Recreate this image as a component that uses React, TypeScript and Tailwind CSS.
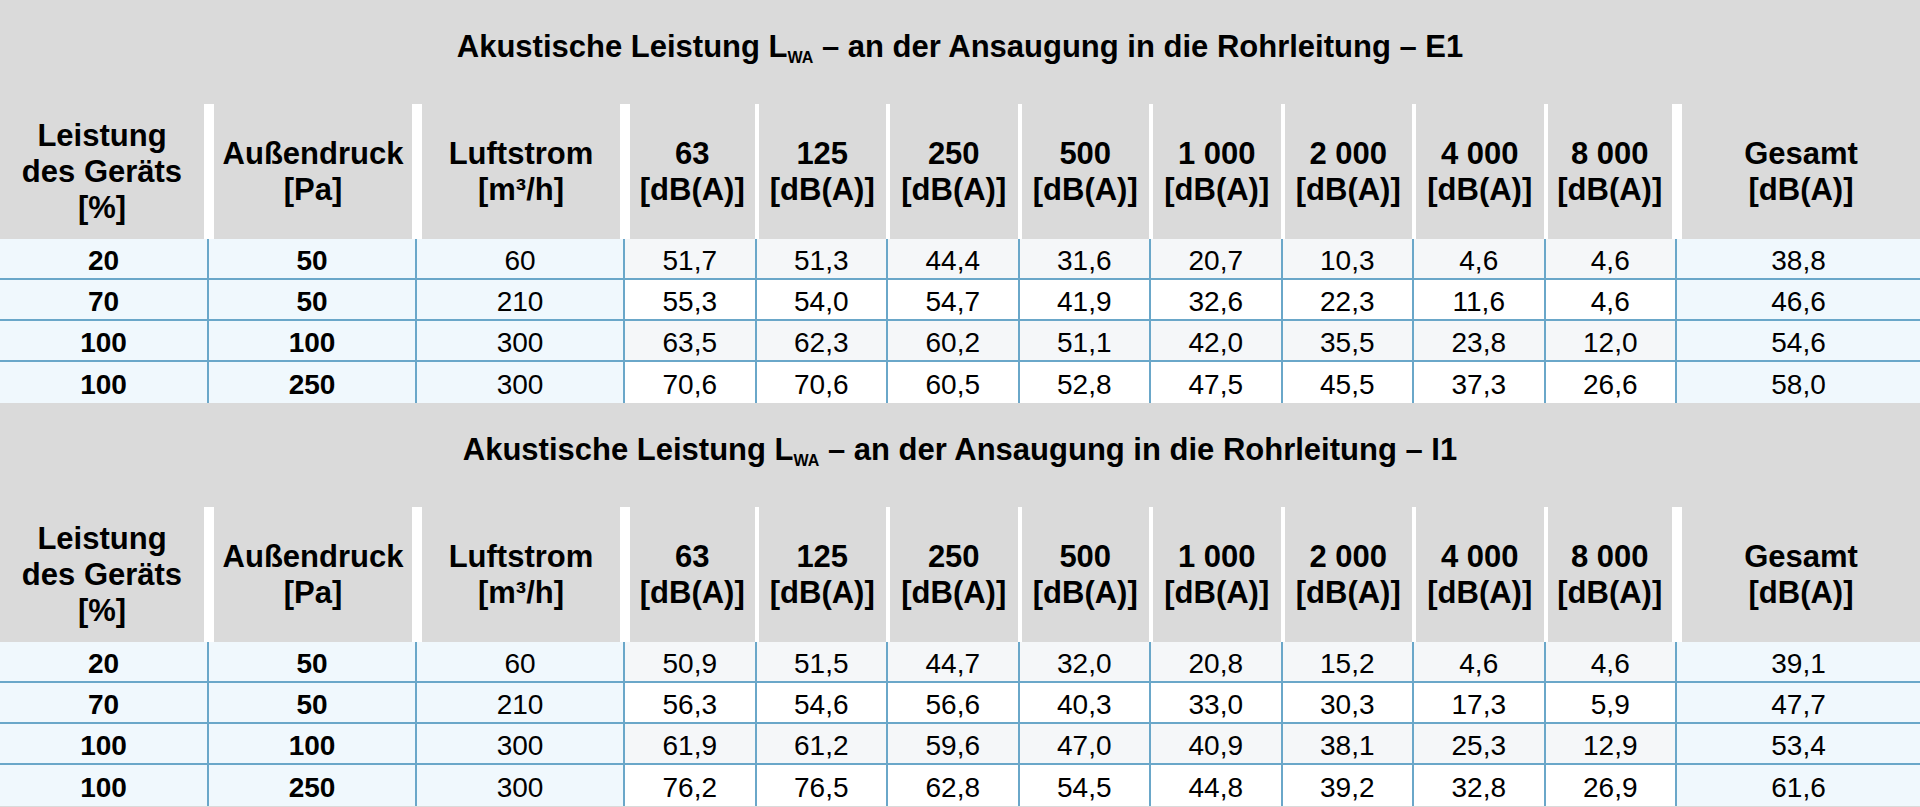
import React from "react";

type Row = { pct: string; pa: string; flow: string; bands: string[]; total: string };

const headers = [
  ["Leistung", "des Geräts", "[%]"],
  ["Außendruck", "[Pa]"],
  ["Luftstrom", "[m³/h]"],
  ["63", "[dB(A)]"],
  ["125", "[dB(A)]"],
  ["250", "[dB(A)]"],
  ["500", "[dB(A)]"],
  ["1 000", "[dB(A)]"],
  ["2 000", "[dB(A)]"],
  ["4 000", "[dB(A)]"],
  ["8 000", "[dB(A)]"],
  ["Gesamt", "[dB(A)]"],
];

// white gaps between header cells: wide around the fixed columns, narrow between the bands
const headerGaps = [
  "mr-[5px]",
  "mx-[5px]",
  "mx-[5px]",
  "ml-[5px] mr-[2px]",
  "mx-[2px]",
  "mx-[2px]",
  "mx-[2px]",
  "mx-[2px]",
  "mx-[2px]",
  "mx-[2px]",
  "ml-[2px] mr-[5px]",
  "ml-[5px]",
];

const e1: Row[] = [
  { pct: "20", pa: "50", flow: "60", bands: ["51,7", "51,3", "44,4", "31,6", "20,7", "10,3", "4,6", "4,6"], total: "38,8" },
  { pct: "70", pa: "50", flow: "210", bands: ["55,3", "54,0", "54,7", "41,9", "32,6", "22,3", "11,6", "4,6"], total: "46,6" },
  { pct: "100", pa: "100", flow: "300", bands: ["63,5", "62,3", "60,2", "51,1", "42,0", "35,5", "23,8", "12,0"], total: "54,6" },
  { pct: "100", pa: "250", flow: "300", bands: ["70,6", "70,6", "60,5", "52,8", "47,5", "45,5", "37,3", "26,6"], total: "58,0" },
];

const i1: Row[] = [
  { pct: "20", pa: "50", flow: "60", bands: ["50,9", "51,5", "44,7", "32,0", "20,8", "15,2", "4,6", "4,6"], total: "39,1" },
  { pct: "70", pa: "50", flow: "210", bands: ["56,3", "54,6", "56,6", "40,3", "33,0", "30,3", "17,3", "5,9"], total: "47,7" },
  { pct: "100", pa: "100", flow: "300", bands: ["61,9", "61,2", "59,6", "47,0", "40,9", "38,1", "25,3", "12,9"], total: "53,4" },
  { pct: "100", pa: "250", flow: "300", bands: ["76,2", "76,5", "62,8", "54,5", "44,8", "39,2", "32,8", "26,9"], total: "61,6" },
];

const cols = "grid grid-cols-[209px_208px_208px_repeat(8,131.5px)_1fr]";
const cell = "flex items-center justify-center pt-[5px] overflow-hidden";

function Section({ suffix, rows }: { suffix: string; rows: Row[] }) {
  return (
    <div>
      <div className="h-[104px] flex items-center justify-center pb-[8px] text-[31px] leading-none font-bold text-black">
        <span>
          Akustische Leistung L<span className="text-[16px] align-[-6px]">WA</span> – an der Ansaugung in die Rohrleitung – {suffix}
        </span>
      </div>

      <div className={cols + " h-[135px] bg-white"}>
        {headers.map((lines, i) => (
          <div key={i} className={"bg-[#dadada] flex flex-col items-center justify-center text-[31px] leading-[36px] font-bold text-black whitespace-nowrap " + headerGaps[i]}>
            {lines.map((l) => (
              <span key={l}>{l}</span>
            ))}
          </div>
        ))}
      </div>

      {rows.map((r, ri) => {
        const band = ri % 2 === 0 ? "bg-[#f5f7f9]" : "bg-white";
        const last = ri === rows.length - 1;
        return (
          <div key={ri} className={cols + " h-[41px] text-[28px] leading-none text-black " + (last ? "" : "border-b-2 border-[#6aa7c9]")}>
            <div className={cell + " bg-[#f0f8fd] border-r-2 border-[#6aa7c9] font-bold"}>{r.pct}</div>
            <div className={cell + " bg-[#f0f8fd] border-r-2 border-[#6aa7c9] font-bold"}>{r.pa}</div>
            <div className={cell + " bg-[#f0f8fd] border-r-2 border-[#6aa7c9]"}>{r.flow}</div>
            {r.bands.map((v, bi) => (
              <div key={bi} className={cell + " " + band + " border-r-2 border-[#6aa7c9]"}>
                {v}
              </div>
            ))}
            <div className={cell + " bg-[#f0f8fd]"}>{r.total}</div>
          </div>
        );
      })}
    </div>
  );
}

export default function App() {
  return (
    <div className="w-[1920px] h-[807px] overflow-hidden bg-[#dadada] font-['Liberation_Sans',Arial,sans-serif]">
      <Section suffix="E1" rows={e1} />
      <Section suffix="I1" rows={i1} />
    </div>
  );
}
